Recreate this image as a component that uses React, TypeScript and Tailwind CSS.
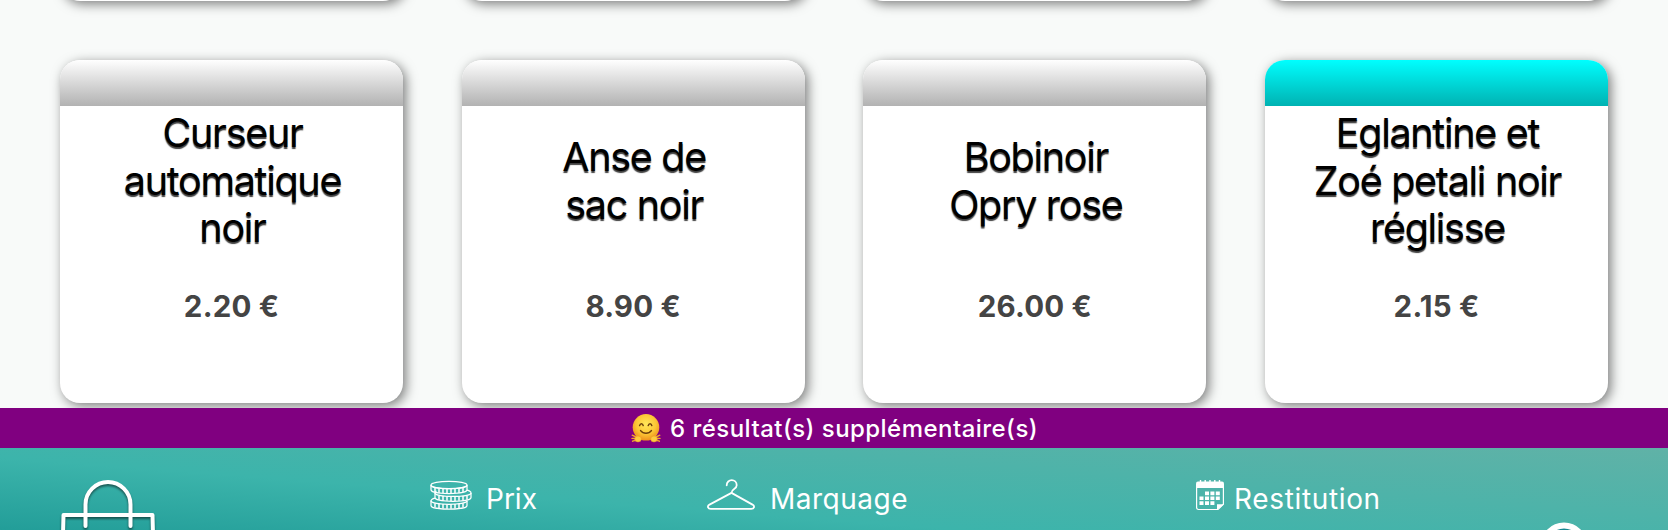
import React from "react";

type Product = { lines: string[]; price: string; accent?: boolean };

const products: Product[] = [
  { lines: ["Curseur", "automatique", "noir"], price: "2.20 €" },
  { lines: ["Anse de", "sac noir"], price: "8.90 €" },
  { lines: ["Bobinoir", "Opry rose"], price: "26.00 €" },
  { lines: ["Eglantine et", "Zoé petali noir", "réglisse"], price: "2.15 €", accent: true },
];

const cardBase =
  "w-[343px] shrink-0 overflow-hidden rounded-[20px] bg-white shadow-[3px_3px_12px_rgba(0,0,0,0.5)]";

function Card({ product }: { product: Product }) {
  return (
    <article className={`${cardBase} flex h-[343px] flex-col items-center`}>
      <div
        className={
          product.accent
            ? "h-[46px] w-full bg-linear-to-b from-[#00ffff] to-[#00b2b2]"
            : "h-[46px] w-full bg-linear-to-b from-[#ffffff] to-[#b2b2b2]"
        }
      />
      <h2 className="flex h-[151px] flex-col justify-center pl-[2px] text-center text-[39.5px] leading-[47.5px] tracking-[-1.3px] whitespace-nowrap text-black [text-shadow:0_2px_1px_rgba(0,0,0,0.75)]">
        {product.lines.map((line) => (
          <span key={line}>{line}</span>
        ))}
      </h2>
      <p className="mt-[31px] text-[29.5px] leading-[36px] font-bold tracking-[0.2px] text-[#444444]">
        {product.price}
      </p>
    </article>
  );
}

function HugEmoji() {
  return (
    <svg viewBox="0 0 30 30" className="h-[30px] w-[30px]" aria-hidden="true">
      <defs>
        <radialGradient id="face" cx="50%" cy="38%" r="62%">
          <stop offset="0" stopColor="#ffe85a" />
          <stop offset="0.6" stopColor="#fcc635" />
          <stop offset="1" stopColor="#ee8f1c" />
        </radialGradient>
      </defs>
      <circle cx="15" cy="14.3" r="13.3" fill="url(#face)" />
      <g fill="none" stroke="#6b3e0c" strokeWidth="1.5" strokeLinecap="round">
        <path d="M8.6 12.6c.7-2.6 3-2.6 3.6 0M17.2 12.6c.7-2.6 3-2.6 3.6 0" />
        <path d="M9.6 17.6c2.6 3.6 8.2 3.6 10.8 0" />
      </g>
      <g stroke="#f2a42a" strokeWidth="1.4" strokeLinecap="round">
        <path d="M5 24 1.2 22.2M5 25.5 1 25.4M5.4 27 1.6 28.2M6.4 24 5.8 21M25 24l3.800-1.800M25 25.500l4-.1M24.600 27l3.800 1.200M23.600 24l.6-3" />
      </g>
      <ellipse cx="7" cy="26" rx="3.3" ry="3" fill="#fccb40" stroke="#e99621" strokeWidth="0.5" />
      <ellipse cx="23" cy="26" rx="3.3" ry="3" fill="#fccb40" stroke="#e99621" strokeWidth="0.5" />
    </svg>
  );
}

function Coins() {
  const coin = (x: number, y: number) => (
    <g key={y}>
      <path d={`M${x} ${y}v4.600c0 5 36 5 36 0v-4.600`} />
      <path d={`M${x} ${y}c0 4.600 36 4.600 36 0`} />
      <path
        strokeWidth="1.5"
        d={`M${x + 4} ${y + 2.500}v4.300M${x + 8} ${y + 3}v4.500M${x + 12} ${y + 3.300}v4.500M${x + 16} ${y + 3.500}v4.500M${x + 20} ${y + 3.500}v4.500M${x + 24} ${y + 3.300}v4.500M${x + 28} ${y + 3}v4.500M${x + 32} ${y + 2.500}v4.300`}
      />
    </g>
  );
  return (
    <svg viewBox="0 0 42 31" className="h-[31px] w-[42px]" fill="none" stroke="#fff" strokeWidth="1.25" aria-hidden="true">
      <ellipse cx="19" cy="5" rx="18" ry="3.6" />
      {coin(1, 5.2)}
      {coin(5, 13)}
      {coin(1, 20.800)}
      <path d="M5 13c0-1 .6-1.600 1.600-2M41 13c0-1.400-1.500-2.200-4-2.800M1 21c0-1.500 1.500-2.300 4-2.900" />
    </svg>
  );
}

function Hanger() {
  return (
    <svg viewBox="0 0 48 32" className="h-[32px] w-[48px]" fill="none" stroke="#fff" strokeWidth="1.8" strokeLinecap="round" strokeLinejoin="round" aria-hidden="true">
      <path d="M19.700 6.300c0-6.800 10-6.800 10 0 0 4.200-5.200 3.200-5.200 7.600" />
      <path d="M24.500 13.900 45.500 25.600c2.600 1.600 1.800 4.300-1.200 4.300H3.700c-3 0-3.800-2.700-1.200-4.300z" />
    </svg>
  );
}

function CalendarIcon() {
  return (
    <svg viewBox="0 0 30 32" className="h-[32px] w-[30px]" aria-hidden="true">
      <path fill="#fff" d="M1 9V4.500Q1 2.500 3 2.500h24Q29 2.500 29 4.500V9z" />
      <path stroke="#fff" strokeWidth="1.400" d="M5.500 1v3M10.200 1v3M15 1v3M19.800 1v3M24.500 1v3" />
      <path fill="none" stroke="#fff" strokeWidth="1.200" d="M1.600 8v20.500q0 2 2 2H23l5.400-5.300V8" />
      <path fill="#fff" d="M22 31v-5.700h7z" />
      <path
        fill="#fff"
        d="M10 12.500h4v3.700h-4zM15.400 12.500h4v3.700h-4zM20.800 12.500h4v3.700h-4zM4.500 17.400h4v3.700h-4zM10 17.400h4v3.700h-4zM15.400 17.400h4v3.700h-4zM20.800 17.400h4v3.700h-4zM4.500 22.300h4V26h-4zM10 22.300h4V26h-4zM15.400 22.300h4V26h-4z"
      />
    </svg>
  );
}

export default function App() {
  return (
    <main className="flex h-[530px] w-[1668px] flex-col overflow-hidden bg-[#f8faf9] font-['Inter',sans-serif]">
      <section className="flex h-[408px] shrink-0 flex-col overflow-hidden">
        <div className="flex h-[60px] shrink-0 justify-between px-[60px]">
          {products.map((p) => (
            <div key={p.price} className={`${cardBase} -mt-[60px] h-[61px]`} />
          ))}
        </div>
        <div className="flex shrink-0 justify-between px-[60px]">
          {products.map((p) => (
            <Card key={p.price} product={p} />
          ))}
        </div>
      </section>
      <div className="flex h-[40px] shrink-0 items-center bg-[#800080] pl-[631px] text-[24px] font-medium tracking-[0.46px] whitespace-nowrap text-white">
        <HugEmoji />
        <span className="ml-[9px] pt-[2px]">6 résultat(s) supplémentaire(s)</span>
      </div>
      <footer className="flex h-[125px] shrink-0 items-start overflow-hidden bg-linear-[to_top_right,#15908f_0%,#239e99_18%,#3cb4ab_46%,#60b2a7_100%] text-[28px] leading-[34px] text-white">
        <svg viewBox="0 0 100 120" className="mt-[30px] ml-[58px] h-[120px] w-[100px] shrink-0 drop-shadow-[0_2px_1px_rgba(0,0,0,0.5)]" fill="none" stroke="#fff" strokeWidth="4" strokeLinecap="round" strokeLinejoin="round" aria-hidden="true">
          <path d="M27.500 48V26.500a22.500 22.500 0 0 1 45 0V48" />
          <path d="M5.500 37h89l2 80h-93z" />
        </svg>
        <div className="mt-[32px] ml-[272px] flex w-[277px]">
          <Coins />
          <span className="mt-[2px] ml-[14px]">Prix</span>
        </div>
        <div className="mt-[31px] flex w-[488px]">
          <Hanger />
          <span className="mt-[3px] ml-[15px] tracking-[0.5px]">Marquage</span>
        </div>
        <div className="mt-[31px] flex w-[345px]">
          <CalendarIcon />
          <span className="mt-[3px] ml-[9px] tracking-[0.65px]">Restitution</span>
        </div>
        <svg viewBox="0 0 48 48" className="mt-[74px] h-[48px] w-[48px]" fill="#168791" stroke="#fff" strokeWidth="6" aria-hidden="true">
          <circle cx="24" cy="24" r="20.500" />
        </svg>
      </footer>
    </main>
  );
}
